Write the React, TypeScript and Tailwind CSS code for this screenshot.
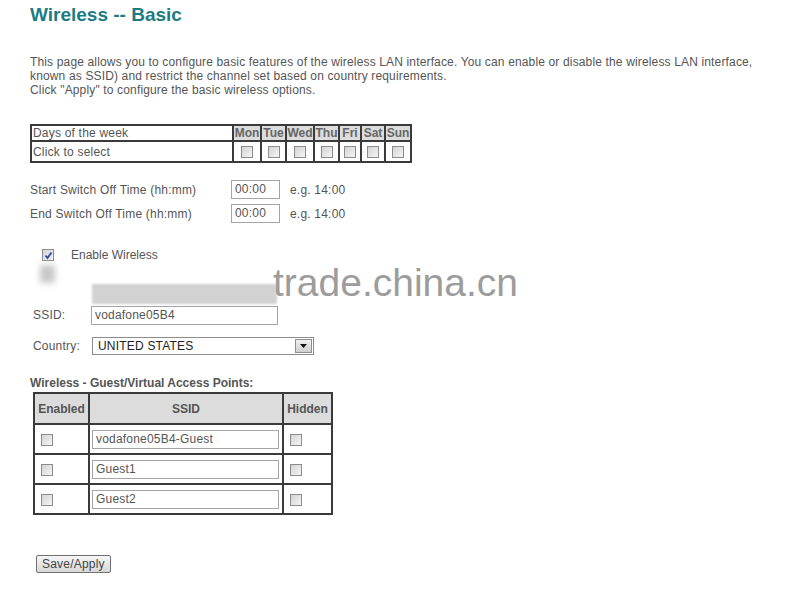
import React from "react";

function Box({ checked = false }: { checked?: boolean }) {
    return (
        <span className="inline-flex w-[12px] h-[12px] border border-[#8c8c8c] bg-gradient-to-br from-[#d4d4d4] to-[#f4f4f4] items-center justify-center align-middle">
            {checked && (
                <svg width="9" height="9" viewBox="0 0 9 9">
                    <path d="M1.5 4.5 L3.5 7 L7.5 1.5" stroke="#2a4c9c" strokeWidth="1.8" fill="none" />
                </svg>
            )}
        </span>
    );
}

function TextBox({ value, w }: { value: string; w: string }) {
    return (
        <div className={`${w} h-[19px] border border-[#a5a5a5] bg-white px-[3px] leading-[17px] text-[12px] text-[#555]`}>{value}</div>
    );
}

const days = [
    { d: "Mon", w: "w-[28px]" },
    { d: "Tue", w: "w-[25px]" },
    { d: "Wed", w: "w-[28px]" },
    { d: "Thu", w: "w-[25px]" },
    { d: "Fri", w: "w-[22px]" },
    { d: "Sat", w: "w-[24px]" },
    { d: "Sun", w: "w-[26px]" },
];

const guests = ["vodafone05B4-Guest", "Guest1", "Guest2"];

export default function App() {
    return (
        <div className="relative w-[788px] h-[591px] bg-white overflow-hidden font-['Liberation_Sans',Arial,sans-serif] text-[12px] tracking-[0.2px] text-[#555] pl-[30px] pt-[4px]">
            <h1 className="text-[19px] font-bold text-[#1d7b82] leading-[22px] tracking-normal">Wireless -- Basic</h1>

            <p className="mt-[29px] w-[740px] leading-[14px] tracking-[0.15px]">
                This page allows you to configure basic features of the wireless LAN interface. You can enable or disable the wireless LAN interface, known as SSID) and restrict the channel set based on country requirements.
                <br />
                Click "Apply" to configure the basic wireless options.
            </p>

            <table className="mt-[27px] border-collapse border-2 border-[#3a3a3a]">
                <tbody>
                    <tr className="h-[16px]">
                        <td className="w-[202px] border-2 border-[#3a3a3a] px-[1px] leading-[13px]">Days of the week</td>
                        {days.map((x) => (
                            <td key={x.d} className={`${x.w} border-2 border-[#3a3a3a] bg-[#dcdcdc] font-bold text-[#666] text-center leading-[13px] px-0 tracking-normal`}>
                                {x.d}
                            </td>
                        ))}
                    </tr>
                    <tr className="h-[21px]">
                        <td className="border-2 border-[#3a3a3a] px-[1px]">Click to select</td>
                        {days.map((x) => (
                            <td key={x.d} className="border-2 border-[#3a3a3a] text-center">
                                <Box />
                            </td>
                        ))}
                    </tr>
                </tbody>
            </table>

            <div className="mt-[17px] flex flex-col gap-[5px]">
                {["Start Switch Off Time (hh:mm)", "End Switch Off Time (hh:mm)"].map((l) => (
                    <div key={l} className="flex items-center h-[19px]">
                        <span className="w-[201px]">{l}</span>
                        <TextBox value="00:00" w="w-[49px]" />
                        <span className="ml-[10px]">e.g. 14:00</span>
                    </div>
                ))}
            </div>

            <div className="mt-[25px] flex items-center pl-[12px] h-[14px]">
                <Box checked />
                <span className="ml-[17px] tracking-normal">Enable Wireless</span>
            </div>

            <div className="pl-[10px] mt-[3px] h-[19px]">
                <div className="w-[15px] h-[18px] bg-[#c8c8c8] blur-[3px]" />
            </div>
            <div className="pl-[62px]">
                <div className="w-[185px] h-[20px] bg-[#d2d2d2] blur-[1px]" />
            </div>

            <div className="mt-[1px] flex items-center h-[20px] pl-[3px]">
                <span className="w-[58px]">SSID:</span>
                <TextBox value="vodafone05B4" w="w-[187px]" />
            </div>

            <div className="mt-[11px] flex items-center h-[19px] pl-[3px]">
                <span className="w-[59px]">Country:</span>
                <div className="w-[222px] h-[18px] border border-[#8c8c8c] bg-white flex items-center">
                    <span className="flex-1 pl-[5px] text-[#222] leading-[16px]">UNITED STATES</span>
                    <span className="w-[17px] h-[14px] mr-[1px] border border-[#8f8f8f] bg-gradient-to-b from-[#f0f0f0] to-[#cfcfcf] flex items-center justify-center">
                        <svg width="7" height="4" viewBox="0 0 7 4">
                            <path d="M0 0 H7 L3.5 4 Z" fill="#111" />
                        </svg>
                    </span>
                </div>
            </div>

            <div className="mt-[21px] font-bold text-[#555] leading-[14px] tracking-normal">Wireless - Guest/Virtual Access Points:</div>

            <table className="ml-[3px] mt-[2px] border-collapse border-2 border-[#3a3a3a]">
                <thead>
                    <tr className="h-[31px] bg-[#dcdcdc] text-[#555] font-bold tracking-normal">
                        <th className="w-[55px] border-2 border-[#3a3a3a] font-bold">Enabled</th>
                        <th className="w-[194px] border-2 border-[#3a3a3a] font-bold">SSID</th>
                        <th className="w-[49px] border-2 border-[#3a3a3a] font-bold">Hidden</th>
                    </tr>
                </thead>
                <tbody>
                    {guests.map((g) => (
                        <tr key={g} className="h-[30px]">
                            <td className="border-2 border-[#3a3a3a] pl-[6px]">
                                <Box />
                            </td>
                            <td className="border-2 border-[#3a3a3a] pl-[2px]">
                                <TextBox value={g} w="w-[187px]" />
                            </td>
                            <td className="border-2 border-[#3a3a3a] pl-[6px]">
                                <Box />
                            </td>
                        </tr>
                    ))}
                </tbody>
            </table>

            <button className="mt-[40px] ml-[6px] h-[18px] px-[5px] border border-[#707070] rounded-[2px] bg-gradient-to-b from-[#f6f6f6] to-[#d8d8d8] text-[12px] text-[#444] leading-[14px]">
                Save/Apply
            </button>

            <div className="absolute left-[273px] top-[259px] text-[39px] leading-[48px] tracking-normal text-[#9c9c9c] pointer-events-none">
                trade.china.cn
            </div>
        </div>
    );
}
